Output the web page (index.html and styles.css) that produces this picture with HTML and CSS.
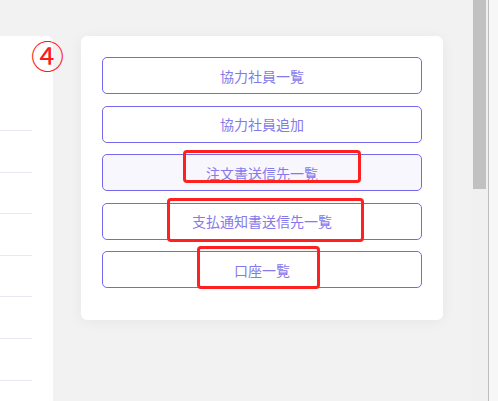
FILE: index.html
```html
<!DOCTYPE html>
<html lang="ja">
<head>
<meta charset="utf-8">
<link rel="stylesheet" href="styles.css">
</head>
<body>
<div class="window">
  <div class="main">
    <div class="left-panel">
      <div class="left-head"></div>
      <div class="row"></div>
      <div class="row r2"></div>
      <div class="row"></div>
      <div class="row r2"></div>
      <div class="row"></div>
      <div class="row"></div>
      <div class="row r2"></div>
    </div>
    <div class="menu-card">
      <button class="menu-btn">協力社員一覧</button>
      <button class="menu-btn">協力社員追加</button>
      <button class="menu-btn hover">注文書送信先一覧</button>
      <button class="menu-btn">支払通知書送信先一覧</button>
      <button class="menu-btn">口座一覧</button>
    </div>
  </div>
  <div class="scrollbar"><div class="thumb"></div></div>
  <div class="edge"></div>
  <div class="mark">④</div>
  <div class="note n1"></div>
  <div class="note n2"></div>
  <div class="note n3"></div>
</div>
</body>
</html>
```
FILE: styles.css
```css
html, body {
  margin: 0;
  padding: 0;
  overflow: hidden;
}
body {
  width: 498px;
  height: 401px;
  background: #f2f2f2;
  font-family: "Noto Sans CJK JP", sans-serif;
}
.window {
  position: relative;
  display: flex;
  width: 498px;
  height: 401px;
  overflow: hidden;
}
.main {
  width: 471px;
  height: 401px;
  display: flex;
  align-items: flex-start;
  gap: 28px;
  padding-top: 36px;
  box-sizing: border-box;
}
.left-panel {
  width: 53px;
  height: 365px;
  overflow: hidden;
  background: #ffffff;
  border-top-right-radius: 6px;
  padding-right: 21px;
  box-sizing: border-box;
  flex-shrink: 0;
}
.left-head {
  height: 94px;
  border-bottom: 1px solid #e9e7ef;
}
.row {
  height: 41px;
  border-bottom: 1px solid #e9e7ef;
}
.row.r2 {
  height: 40px;
}
.menu-card {
  width: 362px;
  background: #ffffff;
  border-radius: 6px;
  box-shadow: 0 2px 14px rgba(0, 0, 0, 0.05);
  padding: 21px 21px 32px 21px;
  box-sizing: border-box;
  display: flex;
  flex-direction: column;
  gap: 11.5px;
  flex-shrink: 0;
}
.menu-btn {
  height: 37px;
  width: 100%;
  background: #ffffff;
  border: 1px solid #7568ee;
  border-radius: 5px;
  color: #8579ec;
  font-family: "Noto Sans CJK JP", sans-serif;
  font-size: 14px;
  padding: 0;
  display: flex;
  align-items: center;
  justify-content: center;
}
.menu-btn.hover {
  background: #f8f7fe;
}
.scrollbar {
  width: 17px;
  height: 401px;
  background: #f0f0f0;
  padding: 0 2px;
  box-sizing: border-box;
  flex-shrink: 0;
}
.thumb {
  height: 189px;
  background: #c1c1c1;
}
.edge {
  width: 10px;
  height: 401px;
  background: #f7f7f7;
  border-left: 1px solid #bdbdbd;
  box-sizing: border-box;
  flex-shrink: 0;
}
.mark {
  position: absolute;
  left: 30px;
  top: 36px;
  width: 35px;
  height: 38px;
  line-height: 38px;
  text-align: center;
  font-family: "Noto Sans CJK JP", sans-serif;
  font-weight: 400;
  font-size: 33px;
  color: #ff1a1a;
}
.note {
  position: absolute;
  border: 3px solid #ff2020;
  border-radius: 4px;
  box-sizing: border-box;
}
.n1 { left: 183px; top: 150px; width: 178px; height: 33px; }
.n2 { left: 167px; top: 198px; width: 197px; height: 44px; }
.n3 { left: 197px; top: 246px; width: 123px; height: 43px; }
```
